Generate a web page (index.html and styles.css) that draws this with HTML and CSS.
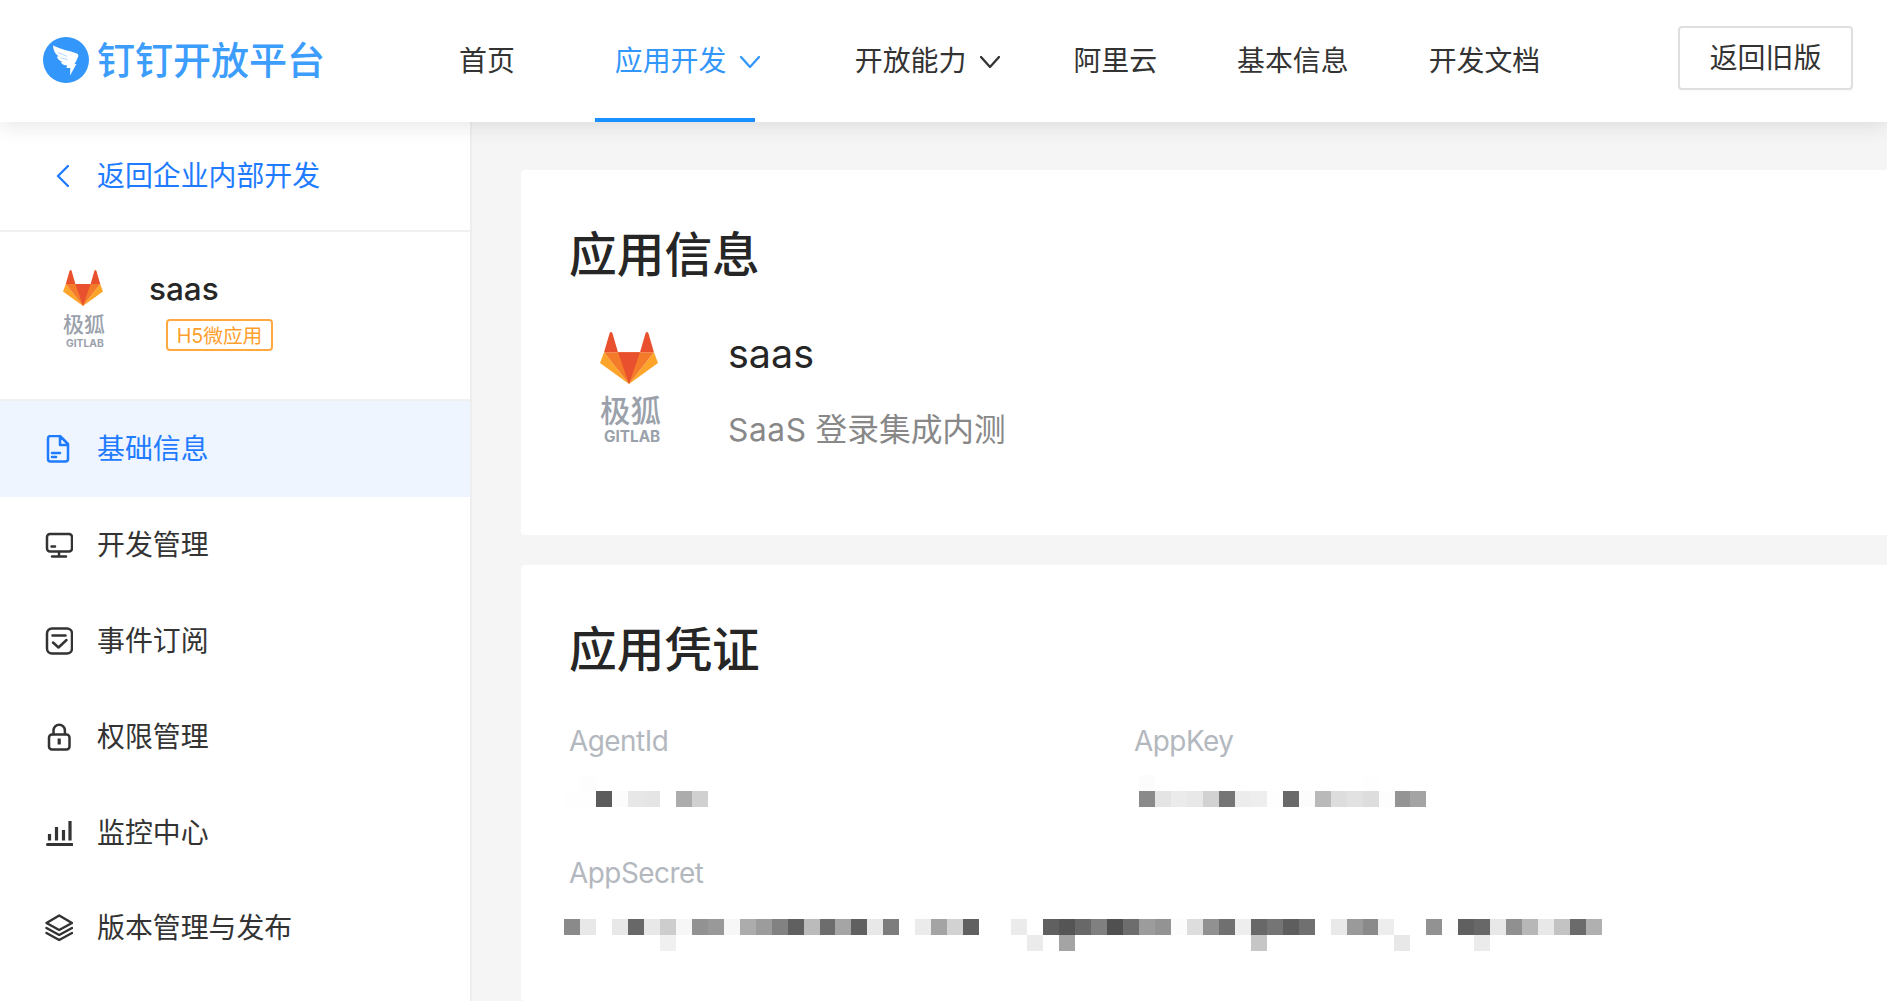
FILE: index.html
```html
<!DOCTYPE html>
<html lang="zh-CN">
<head>
<meta charset="utf-8">
<title>钉钉开放平台</title>
<link rel="stylesheet" href="styles.css">
</head>
<body>
<svg class="defs" aria-hidden="true">
  <symbol id="fox" viewBox="0 0 100 92" preserveAspectRatio="none">
    <path fill="#fca52a" d="M7 36 0 55 50 92zM93 36l7 19-50 37z"/>
    <path fill="#f47b2a" d="M7 36h86L50 92z"/>
    <path fill="#e9502d" d="M31 36h38L50 92zM16.5 2q2.500-4 5 0L31 36H7zM78.500 2q2.500-4 5 0L93 36H69z"/>
  </symbol>
</svg>
<header class="header">
  <a class="brand">
    <svg class="brand-mark" viewBox="0 0 46 46"><circle cx="23" cy="23" r="23" fill="#3296fa"/><path fill="#fff" d="M10 8.500c8 4 16 5 24 8 1.500.7 1.500 2 1 3.500L33 24.500l-1.500 2.500h2L27 38.500l.3-7.500h-4l1-2.500c-3 0-5-1-6.500-3.200l2-.4c-3-1-5-2.500-6-5.500l2 .2C12.500 17 10.500 14 10 8.500z"/><path stroke="#3296fa" stroke-width=".4" fill="none" d="M15 15.500l9 3.800M17.500 20.800l7 1.700"/></svg>
    <span class="brand-name">钉钉开放平台</span>
  </a>
  <nav class="nav">
    <a class="nav-item home">首页</a>
    <a class="nav-item develop active">应用开发<svg class="arrow" viewBox="0 0 20 13"><path d="M1 1l9 10 9-10"/></svg></a>
    <a class="nav-item ability">开放能力<svg class="arrow" viewBox="0 0 20 13"><path d="M1 1l9 10 9-10"/></svg></a>
    <a class="nav-item cloud">阿里云</a>
    <a class="nav-item">基本信息</a>
    <a class="nav-item">开发文档</a>
  </nav>
  <button class="old-version">返回旧版</button>
</header>
<div class="body">
  <aside class="sidebar">
    <a class="back"><svg class="back-arrow" viewBox="0 0 13 22"><path d="M12 1L2 11l10 10"/></svg>返回企业内部开发</a>
    <div class="profile">
      <div class="app-logo small"><svg class="fox"><use href="#fox"/></svg><span class="logo-cn">极狐</span><span class="logo-en">GITLAB</span></div>
      <div class="profile-text"><div class="profile-name">saas</div><span class="tag">H5微应用</span></div>
    </div>
    <ul class="menu">
      <li class="menu-item active"><svg class="icon" viewBox="0 0 28 28"><path d="M5 1h10l8 8v15a2.500 2.500 0 0 1-2.500 2.500h-15A2.500 2.500 0 0 1 3 24V3.500A2.500 2.500 0 0 1 5 1zM15 1.500V10h7.500M7 18h8M7 22h4"/></svg>基础信息</li>
      <li class="menu-item"><svg class="icon" viewBox="0 0 28 28"><rect x="2" y="3" width="25" height="17.500" rx="3"/><path d="M14 21v4M7 25.500h14M6.500 15.500H10"/></svg>开发管理</li>
      <li class="menu-item"><svg class="icon" viewBox="0 0 28 28"><rect x="2" y="1.500" width="25" height="25" rx="5"/><path d="M7.500 8.500h13M8 15.500l5.500 5 8-7.500"/></svg>事件订阅</li>
      <li class="menu-item"><svg class="icon" viewBox="0 0 28 28"><rect x="4" y="11.500" width="20.500" height="15" rx="3"/><path d="M8.500 11V7.500a5.700 5.700 0 0 1 11.400 0V11"/><path class="bold" d="M14.200 15.500v6"/></svg>权限管理</li>
      <li class="menu-item"><svg class="icon" viewBox="0 0 28 28"><path class="base" d="M2.500 25.500h24.500"/><path class="bold" d="M4.500 15v6.500M11.500 8v13.500M18.500 11v10.500M25 2v19.500"/></svg>监控中心</li>
      <li class="menu-item"><svg class="icon" viewBox="0 0 28 28"><path d="M14.200 1.500L27 9l-12.800 7L1.500 9zM1.500 14l12.700 7 12.800-7M1.500 19l12.700 7 12.800-7"/></svg>版本管理与发布</li>
    </ul>
  </aside>
  <main class="content">
    <section class="card info">
      <h2 class="card-title">应用信息</h2>
      <div class="app">
        <div class="app-logo large"><svg class="fox"><use href="#fox"/></svg><span class="logo-cn">极狐</span><span class="logo-en">GITLAB</span></div>
        <div class="app-text"><div class="app-name">saas</div><div class="app-desc"><span class="latin">SaaS</span> 登录集成内测</div></div>
      </div>
    </section>
    <section class="card credentials">
      <h2 class="card-title">应用凭证</h2>
      <div class="fields">
        <div class="field"><div class="label">AgentId</div><svg class="mosaic" data-rows="-,fd|fe,fe,5c,fc,e7,e5,-,ac,d0|-"></svg></div>
        <div class="field key"><div class="label">AppKey</div><svg class="mosaic" data-rows="fc,-,-,-,-,-,-,-,-,-,-,-,-,-,fe|8a,e4,eb,e8,d2,75,ec,ee,fe,69,fc,b9,dd,e2,dd,fd,94,a4|-"></svg></div>
        <div class="field secret"><div class="label">AppSecret</div><svg class="mosaic" data-rows="-|8a,e8,-,e8,68,e8,cd,f7,92,99,f7,ac,9c,82,60,bb,6d,a5,60,e8,7d,-,eb,a4,d2,60,-,-,eb,-,60,55,68,80,50,6d,9c,93,fc,dd,91,70,ee,68,75,5e,70,-,e9,9a,8a,ed,-,-,92,fd,60,68,e8,90,b7,e8,c3,6b,b0|-,-,-,-,-,-,f0,-,-,-,-,-,-,-,-,-,-,-,-,-,-,-,-,-,-,-,-,-,-,eb,-,a4,-,-,-,-,-,-,-,-,-,-,-,c6,-,-,-,-,-,-,-,-,e8,-,-,-,-,eb"></svg></div>
      </div>
    </section>
  </main>
</div>
<script src="mosaic.js"></script>
</body>
</html>
```
FILE: styles.css
```css
* { box-sizing: border-box; }
body {
  margin: 0;
  height: 1001px;
  overflow: hidden;
  display: flex;
  flex-direction: column;
  background: #f5f5f5;
  color: #333;
  font: 27.9px/40px Inter, "Noto Sans CJK SC", sans-serif;
}
.defs { position: absolute; width: 0; height: 0; }
svg { flex: none; display: block; }

.header {
  position: relative;
  z-index: 1;
  flex: none;
  display: flex;
  align-items: center;
  height: 122px;
  padding: 0 34px 0 43px;
  background: #fff;
  box-shadow: 0 4px 20px rgba(0, 0, 0, .1);
}
.brand { display: flex; align-items: center; width: 416px; padding-bottom: 3px; color: #3d9dfc; }
.brand-mark { width: 46px; height: 46px; margin-right: 8px; }
.brand-name { font-size: 38px; font-weight: 500; line-height: 56px; white-space: nowrap; }
.nav { display: flex; height: 122px; }
.nav-item {
  display: flex;
  align-items: center;
  height: 122px;
  margin-right: 80px;
  padding-bottom: 1px;
  white-space: nowrap;
}
.nav-item.home { margin-right: 80px; }
.nav-item.ability { margin-right: 73px; }
.nav-item.active {
  width: 160px;
  margin-right: 100px;
  padding-left: 20px;
  color: #3296fa;
  box-shadow: inset 0 -4px #1890ff;
}
.arrow { width: 20px; height: 13px; margin: 4px 0 0 14px; }
.arrow path, .back-arrow path { fill: none; stroke: currentColor; stroke-width: 2.3; stroke-linecap: round; stroke-linejoin: round; }
.old-version {
  width: 175px;
  height: 64px;
  margin: -6px 0 0 auto;
  padding: 0;
  border: 2px solid #dfdfdf;
  border-radius: 4px;
  background: #fff;
  color: #333;
  font: inherit;
  box-shadow: 0 2px 2px rgba(0, 0, 0, .02);
}

.body { display: flex; flex: 1; min-height: 0; }
.sidebar { flex: none; width: 472px; border-right: 2px solid #eee; background: #fff; }
.back {
  display: flex;
  align-items: center;
  height: 110px;
  padding-left: 56px;
  border-bottom: 2px solid #f0f0f0;
  color: #1f7bff;
}
.back-arrow { width: 13px; height: 22px; margin-right: 28px; }
.profile { display: flex; height: 169px; padding: 38px 0 0 63px; border-bottom: 2px solid #f0f0f0; }
.app-logo { display: flex; flex-direction: column; align-items: flex-start; color: #9aa1ab; white-space: nowrap; }
.logo-cn { font-weight: 500; }
.logo-en { font-weight: 700; }
.small { width: 41px; }
.small .fox { width: 40px; height: 36px; }
.small .logo-cn { font-size: 21px; line-height: 28px; margin-top: 5px; }
.small .logo-en { font-size: 10.3px; line-height: 12px; margin: -2px 0 0 3px; }
.profile-text { margin-left: 45px; }
.profile-name { font-size: 31.5px; font-weight: 500; line-height: 38px; color: #262626; }
.tag {
  display: block;
  width: 107px;
  height: 32px;
  margin: 11px 0 0 17px;
  border: 2px solid #ffa940;
  border-radius: 4px;
  color: #ff9f2e;
  font-size: 19.8px;
  line-height: 30px;
  letter-spacing: -.1px;
  text-align: center;
  white-space: nowrap;
}
.menu { margin: 0; padding: 0; list-style: none; }
.menu-item { display: flex; align-items: center; height: 95.900px; padding-left: 44.500px; }
.menu-item.active { background: #eef5ff; color: #1f7bff; }
.icon {
  width: 28px;
  height: 28px;
  margin-right: 24.500px;
  fill: none;
  stroke: currentColor;
  stroke-width: 2.5;
  stroke-linecap: round;
  stroke-linejoin: round;
}
.icon .bold { stroke-width: 3.2; stroke-linecap: butt; }
.icon .base { stroke-width: 3; }

.content { flex: 1; display: flex; flex-direction: column; gap: 30px; padding: 48px 0 0 49px; }
.card { padding-left: 48px; border-radius: 4px 0 0 4px; background: #fff; color: #262626; }
.info { height: 365px; padding-top: 50px; }
.credentials { flex: 1; padding-top: 50px; }
.card-title { margin: 0; font-size: 47.7px; font-weight: 500; line-height: 70px; }
.app { display: flex; margin-top: 42px; padding-left: 31px; }
.large { width: 60px; }
.large .fox { width: 58px; height: 52px; }
.large .logo-cn { font-size: 30.5px; line-height: 40px; margin-top: 7px; }
.large .logo-en { font-size: 15.3px; line-height: 18px; margin: -3px 0 0 4px; }
.app-text { margin-left: 68px; }
.app-name { font-size: 39.5px; line-height: 44px; }
.app-desc { margin-top: 32px; color: #888; font-size: 31.7px; line-height: 44px; }
.latin { letter-spacing: .6px; }
.fields { display: grid; grid-template-columns: 565px 1fr; margin-top: 35px; }
.field { height: 132px; }
.label { height: 40px; padding-top: 1px; color: #b3b8be; letter-spacing: -.5px; }
.mosaic { margin: 15px 0 0 -5px; }
.key .mosaic { margin-left: 5px; }
.secret .mosaic { margin-top: 11px; }
```
FILE: mosaic.js
```js
// Draws masked credential values as rows of grey cells.
const CELL_W = 15.97;
const CELL_H = 16;
document.querySelectorAll('.mosaic').forEach((svg) => {
  const rows = svg.dataset.rows.split('|').map((row) => row.split(','));
  const columns = Math.max(...rows.map((row) => row.length));
  svg.setAttribute('width', Math.ceil(columns * CELL_W));
  svg.setAttribute('height', rows.length * CELL_H);
  rows.forEach((row, y) => row.forEach((shade, x) => {
    if (shade === '-') return;
    const cell = document.createElementNS('http://www.w3.org/2000/svg', 'rect');
    cell.setAttribute('x', x * CELL_W);
    cell.setAttribute('y', y * CELL_H);
    cell.setAttribute('width', CELL_W);
    cell.setAttribute('height', CELL_H);
    cell.setAttribute('fill', '#' + shade.repeat(3));
    cell.setAttribute('shape-rendering', 'crispEdges');
    svg.appendChild(cell);
  }));
});
```
